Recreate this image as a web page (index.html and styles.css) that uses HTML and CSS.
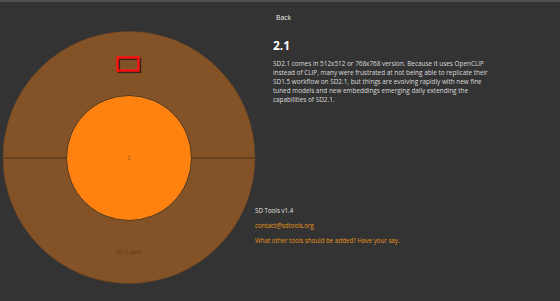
FILE: index.html
```html
<!DOCTYPE html>
<html>
<head>
  <meta charset="UTF-8"/>
  <title>SD Tools - 2.1</title>
  <link rel="stylesheet" href="styles.css">
</head>
<body>
<div id="page">
  <div id="chart-cont">
    <svg id="chart" width="258" height="299" viewBox="0 0 258 299">
      <!-- outer ring: versions -->
      <circle cx="129" cy="155.5" r="126" fill="#845227" stroke="#6b4420" stroke-width="0.6"/>
      <line x1="3" y1="156" x2="255" y2="156" stroke="#5e3c1f" stroke-width="1.4"/>
      <!-- selected segment label -->
      <rect x="119" y="57" width="21" height="13" fill="none" stroke="#1e1a17" stroke-width="2.2" opacity="0.8"/>
      <rect x="117.5" y="55.5" width="21" height="13" fill="none" stroke="#ff1010" stroke-width="2.4"/>
      <text x="128" y="64.5" class="seg-label">2.1</text>
      <text x="129" y="252" class="seg-label">SD1.5 depth</text>
      <!-- inner core -->
      <circle cx="129" cy="156" r="62.5" fill="#ff8210" stroke="#4e3a26" stroke-width="1"/>
      <text x="129" y="158" class="core-label">2</text>
    </svg>
  </div>
  <div id="side">
    <div id="info">
      <a class="back" href="#">Back</a>
      <h2>2.1</h2>
      <p>SD2.1 comes in 512x512 or 768x768 version. Because it uses OpenCLIP instead of CLIP, many were frustrated at not being able to replicate their SD1.5 workflow on SD2.1, but things are evolving rapidly with new fine tuned models and new embeddings emerging daily extending the capabilities of SD2.1.</p>
    </div>
    <div id="foot">
      <p class="ver">SD Tools v1.4</p>
      <a href="#">contact@sdtools.org</a>
      <a href="#">What other tools should be added? Have your say.</a>
    </div>
  </div>
</div>
</body>
</html>
```
FILE: styles.css
```css
html{
  height: 100%;
}
body {
  margin: 0;
  height: 100%;
  background-color: #333333;
  border-top: 2px solid #4f4f4f;
  box-sizing: border-box;
  color: #e6e6e6;
  font-family: "Open Sans", "DejaVu Sans", sans-serif;
  font-size: 6.4px;
}
a{
  text-decoration: none;
}
#page{
  display: flex;
  height: 100%;
}
#chart-cont{
  width: 255px;
  flex: none;
}
#chart{
  display: block;
}
.seg-label, .core-label{
  font-family: "Open Sans", sans-serif;
  font-size: 4.5px;
  text-anchor: middle;
  fill: #5a3a1c;
}
.core-label{fill: #8a4a10;}

#side{
  display: flex;
  flex-direction: column;
  width: 290px;
}
#info{
  padding: 11px 0 0 18px;
}
.back{
  display: block;
  color: #f2f2f2;
  margin-left: 3px;
  font-size: 6.8px;
  line-height: 10px;
}
h2{
  color: #ffffff;
  font-size: 12px;
  margin: 16px 0 6px 0;
  line-height: 14px;
}
#info p{
  margin: 0;
  line-height: 9px;
  width: 216px;
  color: #dcdcdc;
}
#foot{
  margin-top: 103px;
  display: flex;
  flex-direction: column;
  gap: 7px;
  line-height: 8px;
  font-size: 6.2px;
}
#foot .ver{
  margin: 0;
  color: #e0e0e0;
}
#foot a{
  color: #e8931c;
}
```
